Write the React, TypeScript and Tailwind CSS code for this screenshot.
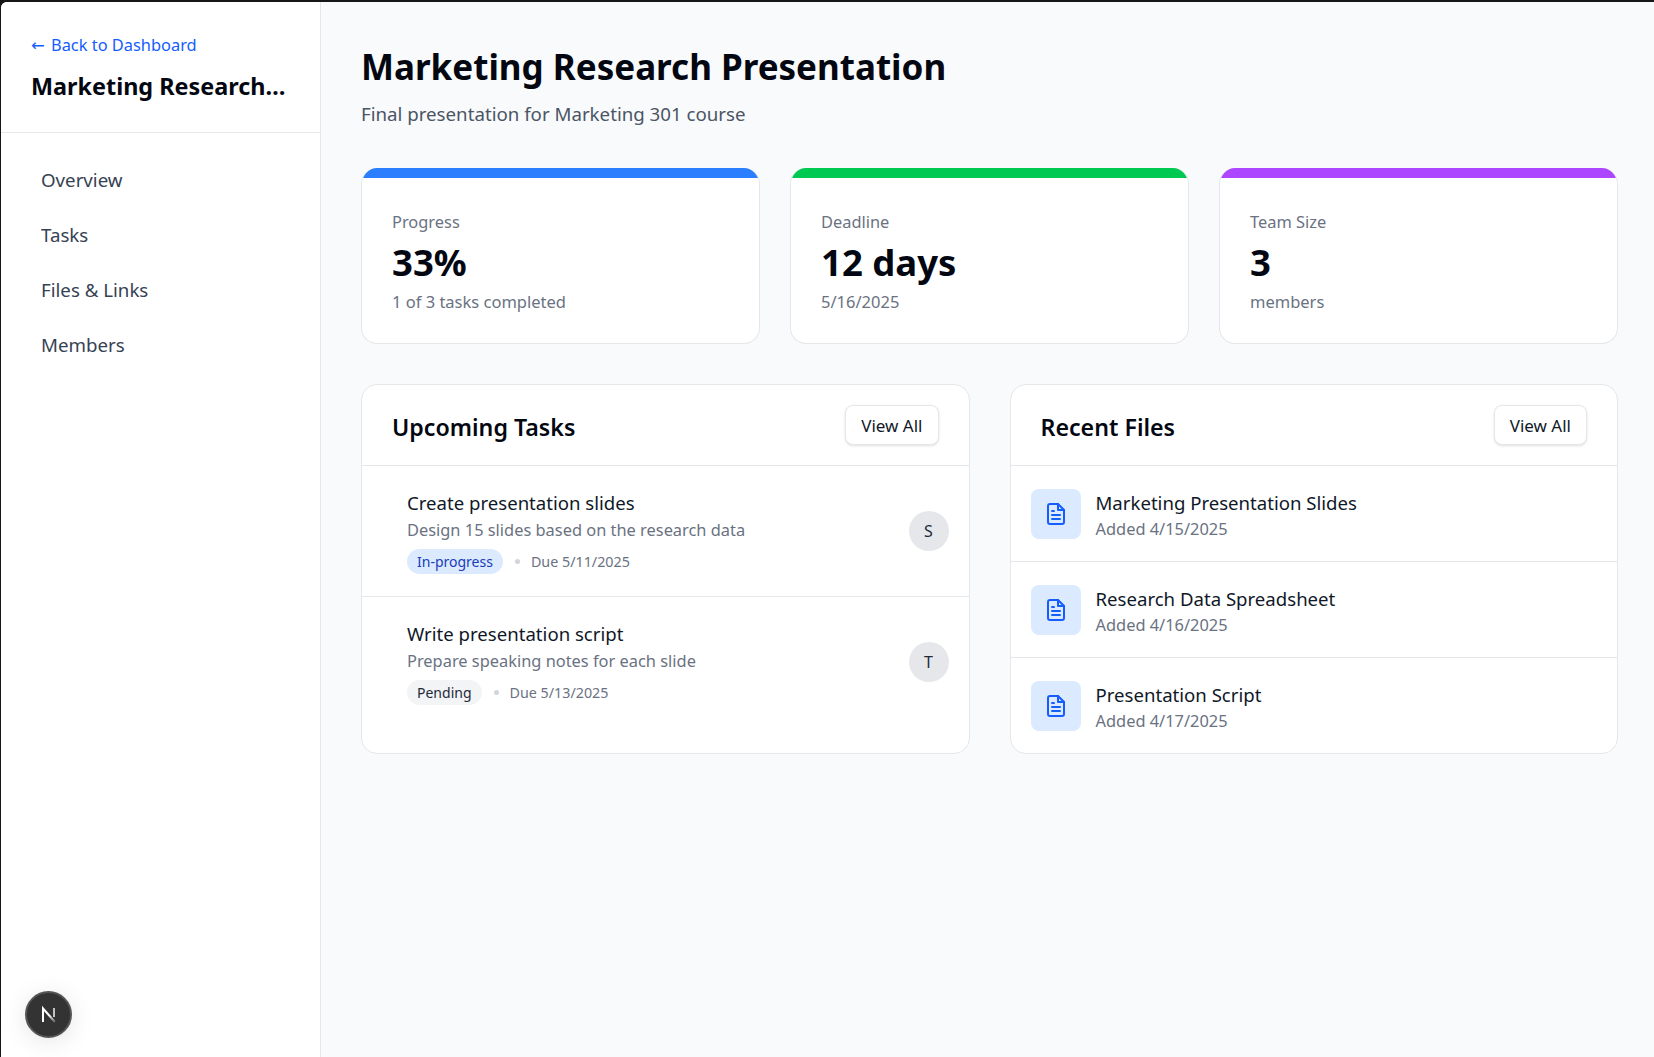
import React from 'react';

const stats = [
  { label: 'Progress', value: '33%', note: '1 of 3 tasks completed', bar: 'bg-blue-500' },
  { label: 'Deadline', value: '12 days', note: '5/16/2025', bar: 'bg-green-500' },
  { label: 'Team Size', value: '3', note: 'members', bar: 'bg-purple-500' },
];

const tasks = [
  {
    title: 'Create presentation slides',
    desc: 'Design 15 slides based on the research data',
    status: 'In-progress',
    badge: 'bg-blue-100 text-blue-800',
    due: 'Due 5/11/2025',
    who: 'S',
  },
  {
    title: 'Write presentation script',
    desc: 'Prepare speaking notes for each slide',
    status: 'Pending',
    badge: 'bg-gray-100 text-gray-800',
    due: 'Due 5/13/2025',
    who: 'T',
  },
];

const files = [
  { name: 'Marketing Presentation Slides', added: 'Added 4/15/2025' },
  { name: 'Research Data Spreadsheet', added: 'Added 4/16/2025' },
  { name: 'Presentation Script', added: 'Added 4/17/2025' },
];

const FileIcon = () => (
  <svg width="24" height="24" viewBox="0 0 24 24" fill="none" stroke="currentColor" strokeWidth="2" strokeLinecap="round" strokeLinejoin="round">
    <path d="M14 2H6a2 2 0 0 0-2 2v16a2 2 0 0 0 2 2h12a2 2 0 0 0 2-2V8z" />
    <path d="M14 2v6h6" />
    <path d="M16 13H8" />
    <path d="M16 17H8" />
    <path d="M10 9H8" />
  </svg>
);

const PanelHeader = ({ title }: { title: string }) => (
  <div className="flex items-center justify-between border-b border-gray-200 py-5 pl-[30px] pr-[30px]">
    <h2 className="mt-1 text-[23.2px] font-semibold leading-8 text-gray-950">{title}</h2>
    <button className="h-10 rounded-lg border border-gray-200 bg-white px-[15px] pt-px text-[17px] text-gray-900 shadow-sm">
      View All
    </button>
  </div>
);

export default function App() {
  return (
    <div className="h-[1057px] w-[1654px] overflow-hidden bg-[#161616] pl-px pt-[2px] font-['Noto_Sans',sans-serif]">
      <div className="flex h-full overflow-hidden rounded-tl-md bg-gray-50">
        {/* sidebar */}
        <aside className="w-[320px] shrink-0 border-r border-gray-200 bg-white">
          <div className="border-b border-gray-200 pb-[30px] pl-[30px] pr-[31px] pt-[31px]">
            <a className="block text-[16.4px] leading-6 text-blue-600">
              <span className="mr-[2px] font-['DejaVu_Sans',sans-serif]">←</span> Back to Dashboard
            </a>
            <h1 className="mt-3 truncate text-[23.4px] font-bold leading-8 text-gray-950">Marketing Research Presentation</h1>
          </div>
          <nav className="flex flex-col gap-[3px] px-[40px] pt-[21px] text-[18.7px] leading-7 text-gray-700">
            <a className="py-3">Overview</a>
            <a className="py-3">Tasks</a>
            <a className="py-3">Files &amp; Links</a>
            <a className="py-3">Members</a>
          </nav>
        </aside>

        {/* main */}
        <main className="flex-1 pb-10 pl-10 pr-9 pt-[45px]">
          <h1 className="text-[35px] font-bold leading-10 text-gray-950">Marketing Research Presentation</h1>
          <p className="mt-[13px] text-[18.7px] leading-7 text-gray-600">Final presentation for Marketing 301 course</p>

          <div className="mt-10 grid grid-cols-3 gap-[30px]">
            {stats.map((s) => (
              <div key={s.label} className="overflow-hidden rounded-2xl border border-t-0 border-gray-200 bg-white">
                <div className={`h-[10px] ${s.bar}`} />
                <div className="px-[30px] pb-[29px] pt-8">
                  <p className="text-[16.4px] leading-6 text-gray-500">{s.label}</p>
                  <p className="mt-2 text-[36.5px] font-bold leading-10 text-gray-950">{s.value}</p>
                  <p className="mt-2 text-[16.5px] leading-6 text-gray-500">{s.note}</p>
                </div>
              </div>
            ))}
          </div>

          <div className="mt-10 grid grid-cols-2 gap-10">
            <section className="overflow-hidden rounded-2xl border border-gray-200 bg-white">
              <PanelHeader title="Upcoming Tasks" />
              {tasks.map((t, i) => (
                <div key={t.title} className={`flex items-center justify-between pb-[22px] pl-[45px] pr-5 pt-[25px] ${i === 0 ? 'border-b border-gray-200' : ''}`}>
                  <div>
                    <p className="text-[18.6px] leading-6 text-gray-900">{t.title}</p>
                    <p className="mt-[3px] text-[16.4px] leading-6 text-gray-500">{t.desc}</p>
                    <div className="mt-[7px] flex items-center">
                      <span className={`rounded-full px-[10px] py-[2px] text-sm leading-[21px] ${t.badge}`}>{t.status}</span>
                      <span className="ml-3 mr-[11px] h-[5px] w-[5px] rounded-full bg-gray-300" />
                      <span className="text-[14.3px] text-gray-500">{t.due}</span>
                    </div>
                  </div>
                  <div className="-mt-[3px] flex h-10 w-10 items-center justify-center rounded-full bg-gray-200 text-base text-gray-800">{t.who}</div>
                </div>
              ))}
            </section>

            <section className="overflow-hidden rounded-2xl border border-gray-200 bg-white">
              <PanelHeader title="Recent Files" />
              {files.map((f, i) => (
                <div key={f.name} className={`flex items-center gap-[15px] pb-[22px] pl-5 pr-5 pt-[23px] ${i < 2 ? 'border-b border-gray-200' : ''}`}>
                  <div className="flex h-[50px] w-[50px] items-center justify-center rounded-lg bg-blue-100 text-blue-600">
                    <FileIcon />
                  </div>
                  <div className="-mb-[2px] pt-[2px]">
                    <p className="text-[18.6px] leading-6 text-gray-900">{f.name}</p>
                    <p className="mt-[2px] text-[16.4px] leading-6 text-gray-500">{f.added}</p>
                  </div>
                </div>
              ))}
            </section>
          </div>
        </main>
      </div>

      {/* dev indicator */}
      <div className="fixed bottom-[19px] left-[25px] flex h-[47px] w-[47px] items-center justify-center rounded-full border-2 border-[#555] bg-[#333] shadow-[0_4px_24px_rgba(0,0,0,0.1)]">
        <svg width="20" height="20" viewBox="0 0 20 20" fill="none">
          <defs>
            <linearGradient id="nfade" x1="4" y1="4" x2="16" y2="17" gradientUnits="userSpaceOnUse">
              <stop offset="0.5" stopColor="#fff" />
              <stop offset="1" stopColor="#fff" stopOpacity="0.2" />
            </linearGradient>
          </defs>
          <path d="M4 17V3.5L16 17" stroke="url(#nfade)" strokeWidth="2" />
          <path d="M15 3v9" stroke="#fff" strokeOpacity="0.7" strokeWidth="2" />
        </svg>
      </div>
    </div>
  );
}
